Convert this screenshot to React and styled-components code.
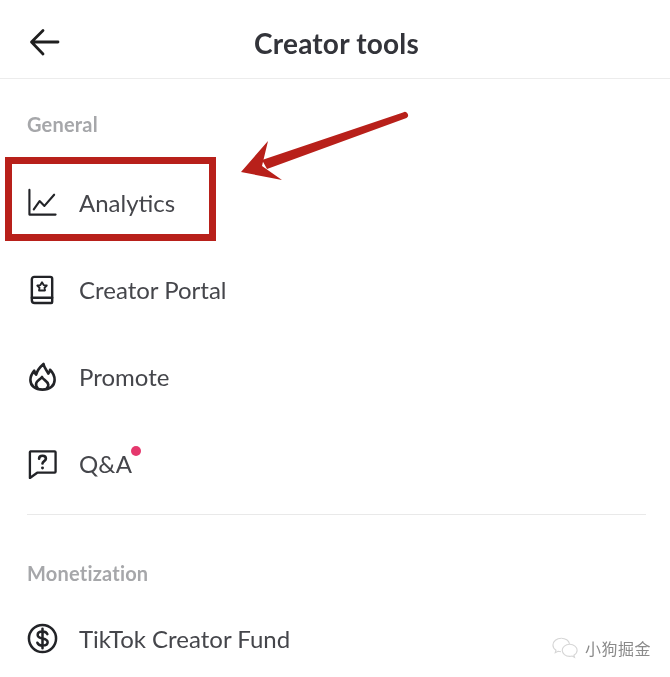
import React from 'react';
import styled, { createGlobalStyle } from 'styled-components';

const GlobalStyle = createGlobalStyle`
  html, body {
    margin: 0;
    padding: 0;
    background: #fff;
  }
`;

const Page = styled.div`
  position: relative;
  width: 670px;
  height: 677px;
  overflow: hidden;
  background: #fff;
  font-family: Lato, "Liberation Sans", sans-serif;
  filter: blur(0.5px);
`;

const Header = styled.header`
  height: 70px;
  padding: 8px 26px 0 29px;
  display: grid;
  grid-template-columns: 1fr auto 1fr;
  align-items: center;
  border-bottom: 1px solid #ececec;
`;

const BackButton = styled.div`
  width: 32px;
  height: 32px;
  color: #1f1f1f;
`;

const Title = styled.h1`
  margin: 0;
  font-size: 28px;
  font-weight: 700;
  letter-spacing: 0.2px;
  color: #33343a;
`;

const Section = styled.section`
  padding: ${(p) => p.$top}px 0 0 27px;
`;

const SectionLabel = styled.div`
  height: 24px;
  line-height: 24px;
  font-size: 20px;
  font-weight: 700;
  letter-spacing: 0.2px;
  color: #a6a7aa;
`;

const List = styled.div`
  display: flex;
  flex-direction: column;
  margin-top: ${(p) => p.$top}px;
`;

const Row = styled.div`
  height: 85px;
  padding-bottom: 2px;
  display: flex;
  align-items: center;
  gap: 21px;
`;

const IconBox = styled.div`
  width: 31px;
  height: 31px;
  flex: none;
  color: #222327;
`;

const RowLabel = styled.span`
  position: relative;
  font-size: 24px;
  color: #45464b;
`;

const Dot = styled.span`
  position: absolute;
  right: -9px;
  top: -3px;
  width: 10px;
  height: 10px;
  border-radius: 50%;
  background: #e5386d;
`;

const Divider = styled.div`
  height: 1px;
  margin: 6px 24px 0 27px;
  background: #e9e9e9;
`;

const Highlight = styled.div`
  position: absolute;
  left: 5px;
  top: 157px;
  width: 211px;
  height: 84px;
  box-sizing: border-box;
  border: 7px solid #b8201a;
`;

const Arrow = styled.svg`
  position: absolute;
  left: 235px;
  top: 105px;
`;

const Watermark = styled.div`
  position: absolute;
  left: 552px;
  top: 636px;
  display: flex;
  align-items: center;
  gap: 6px;
  color: #8a8a8a;
  font-size: 16px;
  letter-spacing: 0.5px;
  font-family: "Noto Sans CJK SC", sans-serif;
`;

const svgProps = {
  width: '100%',
  height: '100%',
  viewBox: '0 0 32 32',
  fill: 'none',
  stroke: 'currentColor',
  strokeWidth: 2.3,
  strokeLinecap: 'round',
  strokeLinejoin: 'round',
};

const BackIcon = () => (
  <svg {...svgProps} strokeWidth={2.8}>
    <path d="M29 15H3M14 3.5 2.5 15 14 27" />
  </svg>
);

const ChartIcon = () => (
  <svg {...svgProps} strokeWidth={2.2}>
    <path d="M2.500 3v25.500h27" />
    <path d="M7 23l6-8.500 5 5L28 8" />
  </svg>
);

const BookIcon = () => (
  <svg {...svgProps} strokeWidth={2.5}>
    <path d="M7.500 3h16.500a2 2 0 0 1 2 2v24a1 1 0 0 1-1 1H8a3 3 0 0 1-3-3V5.500A2.500 2.500 0 0 1 7.500 3z" />
    <path d="M5 24.500h21" />
    <path strokeWidth={1.9} d="M15.500 8.500l1.700 2.900 3.200.5-2.300 2.300.5 2.800h-6.200l.5-2.800-2.300-2.300 3.200-.5z" />
  </svg>
);

const FlameIcon = () => (
  <svg {...svgProps} strokeWidth={2.7}>
    <path d="M17 3c.5 4 3.500 6.500 5 10 1-1 1.700-2.500 1.800-4 3 3 4.700 6.500 4.700 10.500 0 6-5 10-12.500 10S3.500 25.500 3.500 19.500c0-4 2-7 4-9.500.3 2 .8 3.200 2 4C10.500 9.500 13.500 6 17 3z" />
    <path d="M11 28c-1.500-1.500-2-3-1.500-5 .6-2.500 3.500-3.500 6-6.500.8 3 6 4 6.500 8 .2 1.500-.5 2.500-1.500 3.500" />
  </svg>
);

const QuestionIcon = () => (
  <svg {...svgProps} strokeWidth={2.4}>
    <path d="M3.500 3.500h25a1 1 0 0 1 1 1v20a1 1 0 0 1-1 1H10.500L3 31V4.500a1 1 0 0 1 .5-1z" />
    <path strokeWidth={2.7} d="M12.500 11c0-2 1.500-3 3.500-3s3.500 1 3.500 3c0 2.500-3.500 2.500-3.500 5" />
    <path strokeWidth={3} d="M16 20.500v.2" />
  </svg>
);

const DollarIcon = () => (
  <svg {...svgProps} strokeWidth={2.6}>
    <circle cx="16" cy="16" r="14" />
    <path d="M21 11.500c-.7-1.800-2.500-2.700-5-2.700-2.800 0-5 1.300-5 3.500 0 5 10.300 2.500 10.300 7.500 0 2.200-2.300 3.500-5.300 3.500-2.600 0-4.600-1-5.300-2.900M16 6v20" />
  </svg>
);

const WeChatMark = () => (
  <svg width="27" height="24" viewBox="0 0 29 24" fill="none" stroke="#d6d6d6" strokeWidth="1.2">
    <path d="M10 1.500C5 1.500 1 4.800 1 8.800c0 2.300 1.300 4.300 3.300 5.600l-.8 2.600 3-1.500c1 .3 2 .4 3 .4" />
    <path d="M10 1.500c4.500 0 8.200 2.600 8.800 6" />
    <path d="M19 8c-4.500 0-8 3-8 6.500S14.500 21 19 21c1 0 1.800-.1 2.600-.4l2.600 1.400-.7-2.300c2.200-1.200 3.500-3.300 3.500-5.200C27 11 23.500 8 19 8z" />
  </svg>
);

const ArrowShape = () => (
  <Arrow width="180" height="80" viewBox="0 0 180 80">
    <path d="M168 7.500a3 3 0 0 1 3.500 5.500L32 64l-5-9z" fill="#b8201a" />
    <path d="M33 36 6 67 47 75 27 61z" fill="#b8201a" />
  </Arrow>
);

const generalItems = [
  { label: 'Analytics', icon: <ChartIcon /> },
  { label: 'Creator Portal', icon: <BookIcon /> },
  { label: 'Promote', icon: <FlameIcon /> },
  { label: 'Q&A', icon: <QuestionIcon />, dot: true },
];

export default function App() {
  return (
    <>
      <GlobalStyle />
      <Page>
        <Header>
          <BackButton><BackIcon /></BackButton>
          <Title>Creator tools</Title>
        </Header>
        <Section $top={33}>
          <SectionLabel>General</SectionLabel>
          <List $top={24}>
            {generalItems.map((item) => (
              <Row key={item.label}>
                <IconBox>{item.icon}</IconBox>
                <RowLabel>
                  {item.label}
                  {item.dot && <Dot />}
                </RowLabel>
              </Row>
            ))}
          </List>
        </Section>
        <Divider />
        <Section $top={46}>
          <SectionLabel>Monetization</SectionLabel>
          <List $top={11}>
            <Row>
              <IconBox><DollarIcon /></IconBox>
              <RowLabel>TikTok Creator Fund</RowLabel>
            </Row>
          </List>
        </Section>
        <Highlight />
        <ArrowShape />
        <Watermark>
          <WeChatMark />
          小狗掘金
        </Watermark>
      </Page>
    </>
  );
}
